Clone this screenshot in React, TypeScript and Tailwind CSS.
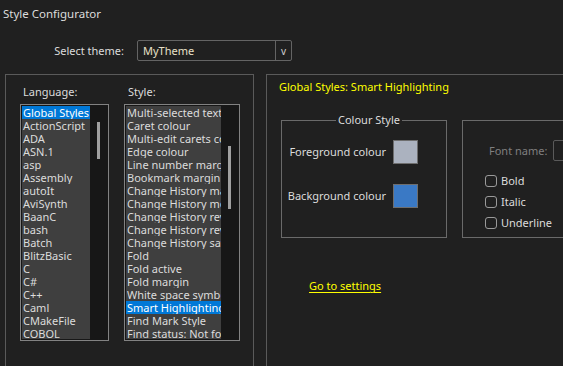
const languages = [
  "Global Styles",
  "ActionScript",
  "ADA",
  "ASN.1",
  "asp",
  "Assembly",
  "autoIt",
  "AviSynth",
  "BaanC",
  "bash",
  "Batch",
  "BlitzBasic",
  "C",
  "C#",
  "C++",
  "Caml",
  "CMakeFile",
  "COBOL",
];

const styles = [
  "Multi-selected text colour",
  "Caret colour",
  "Multi-edit carets colour",
  "Edge colour",
  "Line number margin",
  "Bookmark margin",
  "Change History margin",
  "Change History modified",
  "Change History reverted to origin",
  "Change History reverted to modified",
  "Change History saved",
  "Fold",
  "Fold active",
  "Fold margin",
  "White space symbol",
  "Smart Highlighting",
  "Find Mark Style",
  "Find status: Not found",
];

function ListBox({
  items,
  selected,
  width,
  thumbTop,
  thumbHeight,
}: {
  items: string[];
  selected: string;
  width: string;
  thumbTop: string;
  thumbHeight: string;
}) {
  return (
    <div className="h-[237px] border border-[#828282] bg-[#171717] p-[1px] flex">
      <div className={`${width} h-full bg-[#3f3f3f] overflow-hidden`}>
        {items.map((it) => (
          <div
            key={it}
            className={`h-[13px] leading-[13px] pl-[1px] whitespace-nowrap overflow-hidden ${
              it === selected ? "bg-[#0078d7] text-white" : "text-[#dcdcdc]"
            }`}
          >
            {it}
          </div>
        ))}
      </div>
      <div className="w-[17px] h-full flex justify-center">
        <div className={`w-[3px] ${thumbTop} ${thumbHeight} bg-[#a0a0a0]`} />
      </div>
    </div>
  );
}

function Check({ label }: { label: string }) {
  return (
    <div className="flex items-center gap-[4px] h-[13px]">
      <div className="w-[12px] h-[12px] rounded-[3px] border border-[#9a9a9a]" />
      <span className="text-[#dcdcdc] whitespace-nowrap">{label}</span>
    </div>
  );
}

export default function App() {
  return (
    <div
      className="w-[563px] h-[366px] overflow-hidden bg-[#202020] text-[#dcdcdc] text-[11px] leading-[14px] whitespace-nowrap"
      style={{ fontFamily: '"Noto Sans", sans-serif' }}
    >
      <div className="h-[28px] pl-[3px] pt-[7px] text-[11.5px]">Style Configurator</div>

      <div className="mt-[12px] flex items-center h-[21px]">
        <div className="w-[124px] text-right">Select theme:</div>
        <div className="ml-[13px] w-[155px] h-[21px] border border-[#646464] rounded-[2px] flex">
          <div className="flex-1 pl-[5px] flex items-center text-[#e8e0c8]">MyTheme</div>
          <div className="w-[16px] border-l border-[#646464] flex items-center justify-center text-[10px] text-[#cfcfcf]">
            v
          </div>
        </div>
      </div>

      <div className="mt-[13px] flex pl-[5px] gap-[12px]">
        <div className="w-[249px] h-[300px] shrink-0 border border-[#5a5a5a] pl-[14px] pt-[10px] flex gap-[15px]">
          <div className="flex flex-col">
            <div className="pl-[3px] h-[14px] mb-[5px]">Language:</div>
            <ListBox
              items={languages}
              selected="Global Styles"
              width="w-[68px]"
              thumbTop="mt-[16px]"
              thumbHeight="h-[37px]"
            />
          </div>
          <div className="flex flex-col">
            <div className="pl-[4px] h-[14px] mb-[5px]">Style:</div>
            <ListBox
              items={styles}
              selected="Smart Highlighting"
              width="w-[95px]"
              thumbTop="mt-[40px]"
              thumbHeight="h-[63px]"
            />
          </div>
        </div>

        <div className="w-[360px] h-[300px] shrink-0 border border-[#5a5a5a] pl-[14px] pt-[5px]">
          <div className="-ml-[2px] h-[14px] text-[#ffff00]">Global Styles: Smart Highlighting</div>

          <div className="mt-[26px] flex gap-[15px]">
            <div className="relative w-[166px] h-[118px] shrink-0 border border-[#6a6a6a] pr-[28px] pt-[19px] flex flex-col items-end gap-[20px]">
              <span className="absolute -top-[8px] left-[54px] px-[2px] bg-[#202020]">Colour Style</span>
              <div className="flex items-center gap-[7px]">
                <span>Foreground colour</span>
                <div className="w-[25px] h-[24px] border border-[#6e6e6e] bg-[#abb2bf]" />
              </div>
              <div className="flex items-center gap-[7px]">
                <span>Background colour</span>
                <div className="w-[25px] h-[24px] border border-[#6e6e6e] bg-[#3a79c5]" />
              </div>
            </div>

            <div className="w-[160px] h-[118px] shrink-0 border border-[#6a6a6a] pt-[19px] pl-[22px]">
              <div className="flex items-center h-[21px]">
                <span className="ml-[4px] text-[#7f7f7f]">Font name:</span>
                <div className="ml-[6px] w-[60px] h-[21px] border border-[#5a5a5a] rounded-[2px]" />
              </div>
              <div className="mt-[13px] flex flex-col gap-[8px]">
                <Check label="Bold" />
                <Check label="Italic" />
                <Check label="Underline" />
              </div>
            </div>
          </div>

          <div className="mt-[41px] pl-[28px]">
            <span className="text-[#ffff00] underline underline-offset-[2px]">Go to settings</span>
          </div>
        </div>
      </div>
    </div>
  );
}
